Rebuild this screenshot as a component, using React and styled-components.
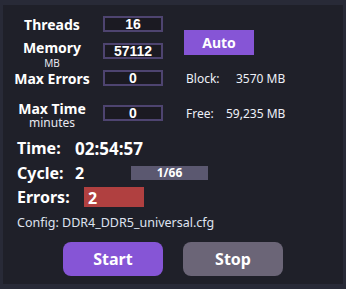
import React from "react";
import styled, { createGlobalStyle } from "styled-components";

const Global = createGlobalStyle`
  html, body { margin: 0; padding: 0; background: #282a37; }
  body { font-family: "Noto Sans", "Open Sans", sans-serif; }
`;

const Frame = styled.div`
  width: 346px;
  height: 289px;
  box-sizing: border-box;
  padding: 5px 3px;
`;

const Panel = styled.div`
  height: 279px;
  background: #1f2029;
  box-sizing: border-box;
  padding: 9px 0 0 9px;
  display: flex;
  flex-direction: column;
  color: #f2f2f8;
`;

const Settings = styled.div`
  display: grid;
  grid-template-columns: 80px 60px 1fr;
  grid-template-rows: 20px 30px 20px 46px;
  row-gap: 2px;
  column-gap: 11px;
  align-items: center;
`;

const Label = styled.div`
  text-align: center;
  font-weight: 700;
  font-size: 14px;
  line-height: 15px;
  color: #ffffff;
  margin-top: ${(p) => p.$shift || 0}px;
`;

const Sub = styled.div`
  font-weight: 400;
  font-size: ${(p) => p.$size}px;
  line-height: ${(p) => p.$size + 2}px;
  margin-top: ${(p) => p.$gap}px;
  color: #e8e8f0;
`;

const ValueBox = styled.div`
  width: 60px;
  height: 16px;
  box-sizing: border-box;
  border: 2px solid #4e4470;
  background: #1b1a22;
  color: #ffffff;
  font-family: "Liberation Sans", Arial, sans-serif;
  font-weight: 700;
  font-size: 14px;
  line-height: 12px;
  text-align: center;
`;

const AutoButton = styled.div`
  grid-column: 3;
  grid-row: 1 / span 2;
  align-self: center;
  margin-left: 10px;
  margin-top: 4px;
  width: 70px;
  height: 25px;
  background: #8655d6;
  color: #ffffff;
  font-weight: 700;
  font-size: 14px;
  line-height: 25px;
  text-align: center;
`;

const Info = styled.div`
  grid-column: 3;
  margin-left: 12px;
  display: flex;
  font-size: 12px;
  color: #eef0f8;
  white-space: nowrap;
`;

const InfoKey = styled.span`
  width: ${(p) => p.$w}px;
`;

const Status = styled.div`
  display: flex;
  flex-direction: column;
  padding-left: 5px;
  margin-top: 1px;
`;

const StatRow = styled.div`
  display: flex;
  align-items: center;
  height: ${(p) => p.$h}px;
  margin-top: ${(p) => p.$mt}px;
`;

const StatLabel = styled.span`
  width: ${(p) => p.$w}px;
  font-weight: 700;
  font-size: 16px;
  color: #ffffff;
`;

const StatValue = styled.span`
  width: ${(p) => p.$w || "auto"};
  font-weight: 700;
  font-size: ${(p) => p.$size || 16}px;
  color: #ffffff;
`;

const Progress = styled.div`
  width: 77px;
  height: 14px;
  background: #5b5870;
  color: #ffffff;
  font-weight: 700;
  font-size: 12px;
  line-height: 14px;
  text-align: center;
`;

const ErrorBox = styled.div`
  width: 60px;
  height: 20px;
  box-sizing: border-box;
  padding-left: 4px;
  background: #b04040;
  color: #ffffff;
  font-weight: 700;
  font-size: 16px;
  line-height: 22px;
`;

const Config = styled.div`
  font-size: 12.5px;
  color: #dfe3f0;
  height: 16px;
  line-height: 16px;
  margin-top: 8px;
`;

const Buttons = styled.div`
  display: flex;
  justify-content: center;
  gap: 20px;
  margin-top: 11px;
  margin-left: -9px;
`;

const Button = styled.div`
  width: 100px;
  height: 34px;
  border-radius: 8px;
  background: ${(p) => (p.$primary ? "#8655d6" : "#6b6577")};
  color: #ffffff;
  font-weight: 700;
  font-size: 16px;
  line-height: 34px;
  text-align: center;
`;

export default function App() {
  return (
    <>
      <Global />
      <Frame>
        <Panel>
          <Settings>
            <Label>Threads</Label>
            <ValueBox>16</ValueBox>
            <AutoButton>Auto</AutoButton>

            <Label $shift={7}>
              Memory
              <Sub $size={10} $gap={2}>MB</Sub>
            </Label>
            <ValueBox>57112</ValueBox>

            <Label>Max Errors</Label>
            <ValueBox>0</ValueBox>
            <Info>
              <InfoKey $w={50}>Block:</InfoKey>
              <span>3570 MB</span>
            </Info>

            <Label $shift={4}>
              Max Time
              <Sub $size={12} $gap={0}>minutes</Sub>
            </Label>
            <ValueBox>0</ValueBox>
            <Info>
              <InfoKey $w={40}>Free:</InfoKey>
              <span>59,235 MB</span>
            </Info>
          </Settings>

          <Status>
            <StatRow $h={22} $mt={0}>
              <StatLabel $w={58}>Time:</StatLabel>
              <StatValue $size={17}>02:54:57</StatValue>
            </StatRow>
            <StatRow $h={20} $mt={4}>
              <StatLabel $w={58}>Cycle:</StatLabel>
              <StatValue $w="56px">2</StatValue>
              <Progress>1/66</Progress>
            </StatRow>
            <StatRow $h={20} $mt={4}>
              <StatLabel $w={67}>Errors:</StatLabel>
              <ErrorBox>2</ErrorBox>
            </StatRow>
            <Config>Config: DDR4_DDR5_universal.cfg</Config>
          </Status>

          <Buttons>
            <Button $primary>Start</Button>
            <Button>Stop</Button>
          </Buttons>
        </Panel>
      </Frame>
    </>
  );
}
